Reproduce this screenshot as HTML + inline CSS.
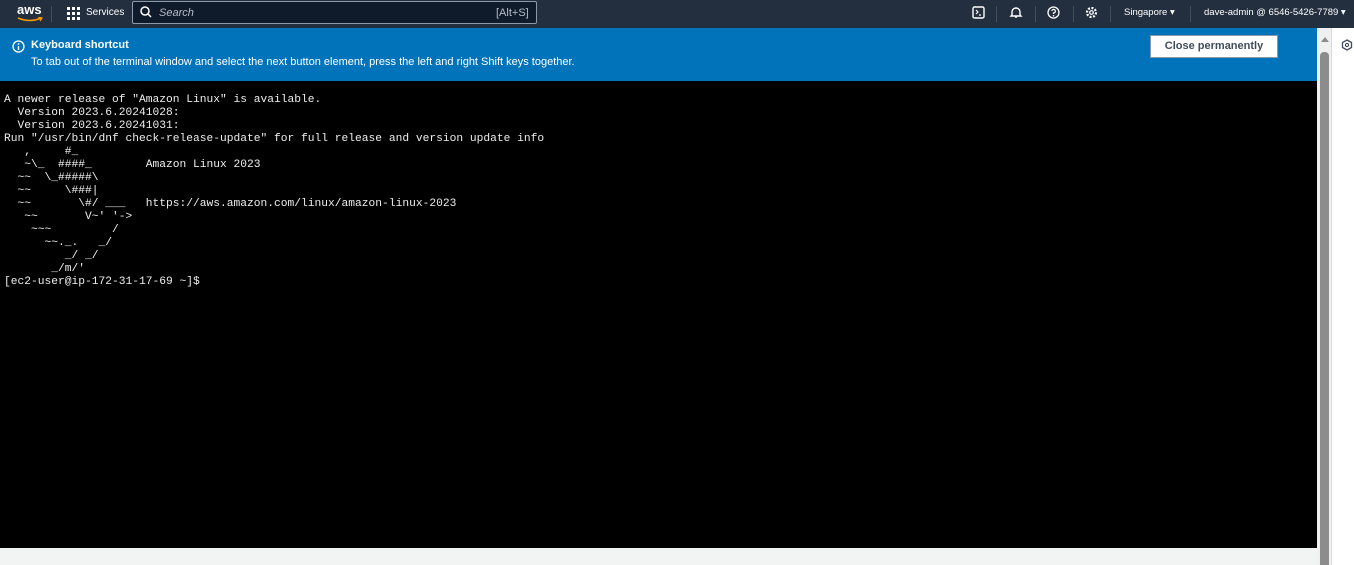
<!DOCTYPE html><html><head><style>
body{margin:0;width:1354px;height:565px;overflow:hidden;background:#fff;font-family:"Liberation Sans",sans-serif;position:relative}
.hdr{position:absolute;left:0;top:0;width:1354px;height:28px;background:#232f3e;color:#fff;font-size:11px}
.hdr span{position:absolute;top:7px}
.sep{position:absolute;top:6px;width:1px;height:16px;background:#414d5c}
.ban{position:absolute;left:0;top:28px;width:1317px;height:53px;background:#0073bb;color:#fff;font-size:11px}
.term{position:absolute;left:0;top:81px;width:1317px;height:467px;background:#000;color:#eee;font-family:"Liberation Mono",monospace;font-size:11.25px;line-height:13px}
.term pre{margin:0;position:absolute;left:4px;top:13px;font:inherit}
</style></head><body>
<div class="hdr">
<span style="left:17px;top:2px;font-size:13px;font-weight:bold">aws</span>
<svg style="position:absolute;left:17px;top:17px" width="26" height="6"><path d="M1 1Q13 6 24 1" stroke="#f90" stroke-width="1.6" fill="none"/><path d="M21 0L25 1L23 4" stroke="#f90" stroke-width="1.2" fill="none"/></svg>
<div class="sep" style="left:51px"></div>
<svg style="position:absolute;left:67px;top:7px" width="13" height="13" fill="#fff"><rect x="0" y="0" width="3" height="3"/><rect x="5" y="0" width="3" height="3"/><rect x="10" y="0" width="3" height="3"/><rect x="0" y="5" width="3" height="3"/><rect x="5" y="5" width="3" height="3"/><rect x="10" y="5" width="3" height="3"/><rect x="0" y="10" width="3" height="3"/><rect x="5" y="10" width="3" height="3"/><rect x="10" y="10" width="3" height="3"/></svg>
<span style="left:86px;font-size:10px">Services</span>
<div style="position:absolute;left:132px;top:1px;width:403px;height:21px;border:1px solid #8d99a8;border-radius:2px;background:#0f1b2a"></div>
<svg style="position:absolute;left:140px;top:6px" width="12" height="12"><circle cx="5" cy="5" r="4" stroke="#fff" stroke-width="1.5" fill="none"/><path d="M8 8L11 11" stroke="#fff" stroke-width="1.5"/></svg>
<span style="left:159px;font-style:italic;color:#b6bec9">Search</span>
<span style="left:496px;color:#b6bec9">[Alt+S]</span>
<svg style="position:absolute;left:972px;top:6px" width="13" height="13"><rect x="1" y="1" width="11" height="11" rx="1.5" stroke="#fff" stroke-width="1.4" fill="none"/><path d="M4 4L6 6L4 8M7 9H9" stroke="#fff" stroke-width="1.2" fill="none"/></svg>
<div class="sep" style="left:996px"></div>
<svg style="position:absolute;left:1009px;top:5px" width="14" height="15"><path d="M3 10V7A4 4 0 0 1 11 7V10L12 11H2Z M6 12H8" stroke="#fff" stroke-width="1.4" fill="none"/></svg>
<div class="sep" style="left:1035px"></div>
<svg style="position:absolute;left:1047px;top:6px" width="13" height="13"><circle cx="6.5" cy="6.5" r="5.5" stroke="#fff" stroke-width="1.3" fill="none"/><path d="M4.8 5A1.8 1.8 0 1 1 6.5 7V8" stroke="#fff" stroke-width="1.2" fill="none"/><circle cx="6.5" cy="9.8" r=".8" fill="#fff"/></svg>
<div class="sep" style="left:1073px"></div>
<svg style="position:absolute;left:1085px;top:6px" width="13" height="13"><circle cx="6.5" cy="6.5" r="4.5" stroke="#fff" stroke-width="2.2" stroke-dasharray="2 1.5" fill="none"/><circle cx="6.5" cy="6.5" r="1.8" stroke="#fff" stroke-width="1.2" fill="none"/></svg>
<div class="sep" style="left:1110px"></div>
<span style="left:1124px;font-size:9.5px">Singapore ▾</span>
<div class="sep" style="left:1190px"></div>
<span style="left:1204px;font-size:9.5px">dave-admin @ 6546-5426-7789 ▾</span>
</div>
<div class="ban">
<svg style="position:absolute;left:12px;top:12px" width="13" height="13"><circle cx="6.5" cy="6.5" r="5.5" stroke="#fff" stroke-width="1.3" fill="none"/><path d="M6.5 6V10" stroke="#fff" stroke-width="1.4"/><circle cx="6.5" cy="4" r=".9" fill="#fff"/></svg>
<div style="position:absolute;left:31px;top:11px;font-weight:bold">Keyboard shortcut</div>
<div style="position:absolute;left:31px;top:28px">To tab out of the terminal window and select the next button element, press the left and right Shift keys together.</div>
<div style="position:absolute;left:1150px;top:7px;width:126px;height:21px;background:#fff;border:1px solid #8d99a8;color:#414d5c;font-weight:bold;text-align:center;line-height:21px">Close permanently</div>
</div>
<div class="term"><pre>A newer release of "Amazon Linux" is available.
  Version 2023.6.20241028:
  Version 2023.6.20241031:
Run "/usr/bin/dnf check-release-update" for full release and version update info
   ,     #_
   ~\_  ####_        Amazon Linux 2023
  ~~  \_#####\
  ~~     \###|
  ~~       \#/ ___   https://aws.amazon.com/linux/amazon-linux-2023
   ~~       V~' '->
    ~~~         /
      ~~._.   _/
         _/ _/
       _/m/'
[ec2-user@ip-172-31-17-69 ~]$</pre></div>
<div style="position:absolute;left:0;top:548px;width:1317px;height:17px;background:#f2f3f3"></div>
<div style="position:absolute;left:1317px;top:28px;width:15px;height:537px;background:#f0f0f0"></div>
<div style="position:absolute;left:1320px;top:52px;width:9px;height:513px;background:#8c8c8c;border-radius:4px 4px 0 0"></div>
<div style="position:absolute;left:1321px;top:37px;width:0;height:0;border-left:4px solid transparent;border-right:4px solid transparent;border-bottom:5px solid #8c8c8c"></div>
<div style="position:absolute;left:1331px;top:28px;width:1px;height:537px;background:#d5dbdb"></div>
<svg style="position:absolute;left:1341px;top:39px" width="12" height="12"><path d="M6 1L10.5 3.5V8.5L6 11L1.5 8.5V3.5Z" stroke="#414d5c" stroke-width="1.3" fill="none"/><circle cx="6" cy="6" r="1.6" stroke="#414d5c" stroke-width="1.1" fill="none"/></svg>
</body></html>
